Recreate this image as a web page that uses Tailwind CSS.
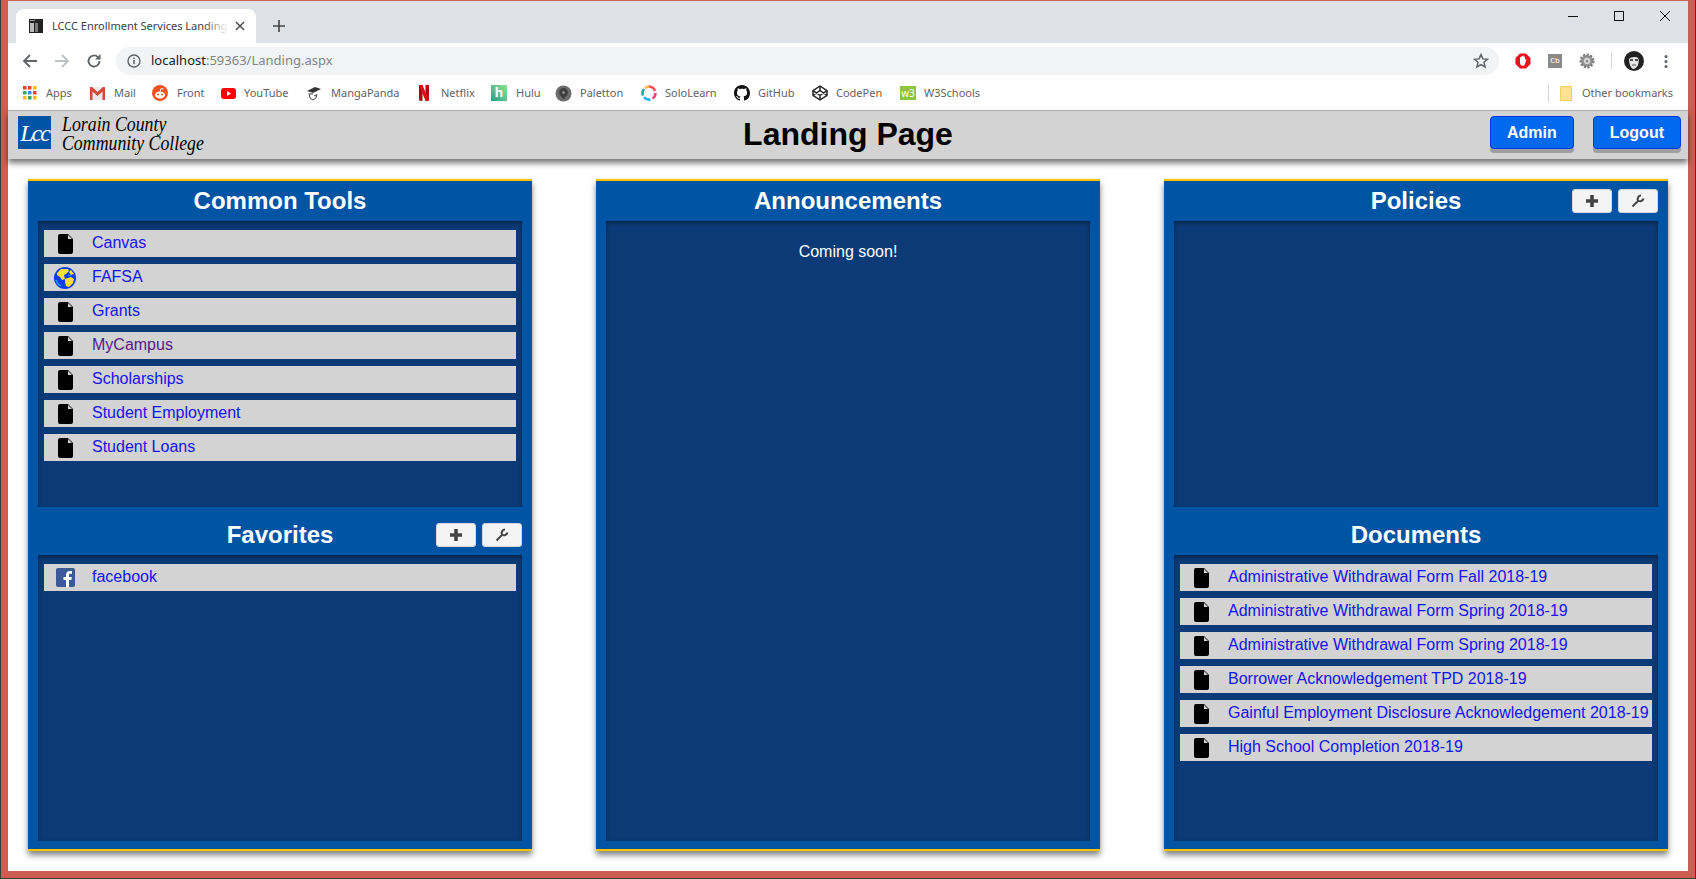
<!DOCTYPE html>
<html lang="en">
<head>
    <meta charset="UTF-8">
    <title>LCCC Enrollment Services Landing Page</title>
    <script src="https://cdn.jsdelivr.net/npm/@tailwindcss/browser@4"></script>
</head>
<body class="bg-[#3a3a3a] overflow-hidden">
<div class="w-[1696px] h-[879px] pl-px pr-px pb-px">
<div class="h-full bg-[#cc5f51] pt-px pl-[7px] pr-[7px] pb-[7px] flex flex-col">

    <!-- browser tab strip -->
    <div class="h-[42px] bg-[#dee1e6] flex items-start font-['Noto_Sans',sans-serif] shrink-0">
        <div class="mt-[8px] ml-[8px] w-[240px] h-[34px] bg-white rounded-t-[8px] flex items-center pl-[13px] pr-[11px]">
            <svg class="w-[14px] h-[14px] shrink-0" viewBox="0 0 14 14"><rect width="14" height="14" fill="#222"/><rect x="1" y="4" width="4" height="9" fill="#bbb"/><rect x="6" y="4" width="3" height="9" fill="#777"/><rect x="1" y="1" width="5" height="1" fill="#999"/></svg>
            <div class="relative ml-[9px] w-[176px] overflow-hidden whitespace-nowrap text-[11px] text-[#3c4043]">LCCC Enrollment Services Landing Page
                <div class="absolute right-0 top-0 h-full w-[24px] bg-gradient-to-r from-white/0 to-white"></div>
            </div>
            <svg class="ml-auto w-[10px] h-[10px] shrink-0" viewBox="0 0 10 10"><path d="M1 1l8 8M9 1l-8 8" stroke="#444" stroke-width="1.4"/></svg>
        </div>
        <svg class="ml-[17px] mt-[19px] w-[12px] h-[12px]" viewBox="0 0 12 12"><path d="M6 0v12M0 6h12" stroke="#444" stroke-width="1.6"/></svg>
        <div class="ml-auto flex">
            <div class="w-[46px] h-[29px] flex items-center justify-center"><svg class="w-[10px] h-[10px]" viewBox="0 0 10 10"><path d="M0 5.5h10" stroke="#111" stroke-width="1"/></svg></div>
            <div class="w-[46px] h-[29px] flex items-center justify-center"><svg class="w-[10px] h-[10px]" viewBox="0 0 10 10"><rect x=".5" y=".5" width="9" height="9" fill="none" stroke="#111"/></svg></div>
            <div class="w-[46px] h-[29px] flex items-center justify-center"><svg class="w-[10px] h-[10px]" viewBox="0 0 10 10"><path d="M0 0l10 10M10 0L0 10" stroke="#111" stroke-width="1"/></svg></div>
        </div>
    </div>

    <!-- browser toolbar -->
    <div class="h-[36px] bg-white flex items-start pt-[4px] font-['Noto_Sans',sans-serif] shrink-0">
        <div class="w-[108px] h-[28px] flex items-center">
            <svg class="ml-[14px] w-[16px] h-[16px]" viewBox="0 0 16 16"><path d="M15 8H2M8 2L2 8l6 6" fill="none" stroke="#5f6368" stroke-width="1.8"/></svg>
            <svg class="ml-[16px] w-[16px] h-[16px]" viewBox="0 0 16 16"><path d="M1 8h13M8 2l6 6-6 6" fill="none" stroke="#bdc1c6" stroke-width="1.8"/></svg>
            <svg class="ml-[16px] w-[16px] h-[16px]" viewBox="0 0 16 16"><path d="M13.500 8A5.500 5.500 0 1 1 11.800 4" fill="none" stroke="#5f6368" stroke-width="1.8"/><path d="M14.500 1v5.500H9z" fill="#5f6368"/></svg>
        </div>
        <div class="w-[1383px] h-[28px] bg-[#f1f3f4] rounded-full flex items-center pl-[11px] pr-[10px]">
            <svg class="w-[14px] h-[14px] shrink-0" viewBox="0 0 14 14"><circle cx="7" cy="7" r="6" fill="none" stroke="#5f6368" stroke-width="1.4"/><path d="M7 6v4.200M7 3.400v1.500" stroke="#5f6368" stroke-width="1.5"/></svg>
            <span class="ml-[10px] text-[13px] text-[#202124]">localhost<span class="text-[#80868b]">:59363/Landing.aspx</span></span>
            <svg class="ml-auto w-[16px] h-[16px]" viewBox="0 0 16 16"><path d="M8 1.600l1.900 4.300 4.600.4-3.500 3 1.100 4.600L8 11.500l-4.100 2.400L5 9.300l-3.500-3 4.600-.4z" fill="none" stroke="#5f6368" stroke-width="1.5"/></svg>
        </div>
        <div class="flex-1 h-[28px] relative">
            <svg class="absolute left-[16px] top-[6px] w-[16px] h-[16px]" viewBox="0 0 16 16"><path d="M5 .5h6L15.500 5v6L11 15.500H5L.5 11V5z" fill="#e8111d"/><path d="M5 7V4.500a.7.7 0 0 1 1.200 0V3.500a.7.7 0 0 1 1.300 0V3a.7.7 0 0 1 1.300 0v1a.7.7 0 0 1 1.200 0v3l.6-.8c.5-.5 1.100 0 .8.600L9.800 11.500c-.4.800-1 1.200-1.800 1.200-1.800 0-3-1.200-3-3z" fill="#fff"/></svg>
            <div class="absolute left-[49px] top-[7px] w-[14px] h-[14px] bg-[#8a8a8a] flex items-center justify-center text-white text-[8px] font-['Liberation_Mono',monospace]">Cb</div>
            <svg class="absolute left-[80px] top-[6px] w-[16px] h-[16px]" viewBox="0 0 16 16"><circle cx="8" cy="8" r="6" fill="#9a9a9a" stroke="#7d7d7d" stroke-width="3" stroke-dasharray="2 1.400"/><circle cx="8" cy="8" r="3" fill="#e2e2e2"/><circle cx="8" cy="8" r="1.500" fill="#8a8a8a"/></svg>
            <div class="absolute left-[112px] top-[5px] w-px h-[17px] bg-[#d5d5d5]"></div>
            <svg class="absolute left-[125px] top-[4px] w-[20px] h-[20px]" viewBox="0 0 20 20"><circle cx="10" cy="10" r="10" fill="#222"/><path d="M5 8c1-2 7-3 9-1 1 1 1 4 0 7-1 2-3 4-5 4-2-1-4-5-4-10z" fill="#e5e5e5"/><path d="M6 9h3M11 9h3" stroke="#222" stroke-width="1.400"/><path d="M8 14h4" stroke="#555"/></svg>
            <svg class="absolute left-[165px] top-[8px] w-[4px] h-[13px]" viewBox="0 0 4 13"><circle cx="2" cy="1.500" r="1.500" fill="#5f6368"/><circle cx="2" cy="6.500" r="1.500" fill="#5f6368"/><circle cx="2" cy="11.500" r="1.500" fill="#5f6368"/></svg>
        </div>
    </div>

    <!-- bookmarks bar -->
    <div class="h-[32px] bg-white border-b border-[#b4b4b4] pb-[3px] pl-[15px] flex items-center text-[11px] text-[#5f6368] font-['Noto_Sans',sans-serif] whitespace-nowrap shrink-0">
        <div class="w-[67px] flex items-center gap-[9px]">
            <svg class="w-[14px] h-[14px]" viewBox="0 0 14 14"><rect width="3.500" height="3.500" fill="#ea4335"/><rect x="5" width="3.500" height="3.500" fill="#ea4335"/><rect x="10" width="3.500" height="3.500" fill="#fbbc05"/><rect y="5" width="3.500" height="3.500" fill="#34a853"/><rect x="5" y="5" width="3.500" height="3.500" fill="#4285f4"/><rect x="10" y="5" width="3.500" height="3.500" fill="#ea4335"/><rect y="10" width="3.500" height="3.500" fill="#fbbc05"/><rect x="5" y="10" width="3.500" height="3.500" fill="#34a853"/><rect x="10" y="10" width="3.500" height="3.500" fill="#fbbc05"/></svg>
            <span>Apps</span>
        </div>
        <div class="w-[62px] flex items-center gap-[9px]">
            <svg class="w-[15px] h-[13px]" viewBox="0 0 15 13"><rect width="15" height="13" fill="#e8e8e8"/><path d="M0 0h2l5.500 5L13 0h2v13h-2.500V4.500L7.500 9l-5-4.500V13H0z" fill="#d44638"/></svg>
            <span>Mail</span>
        </div>
        <div class="w-[69px] flex items-center gap-[9px]">
            <svg class="w-[16px] h-[16px]" viewBox="0 0 16 16"><circle cx="8" cy="8" r="8" fill="#f4511e"/><ellipse cx="8" cy="10" rx="5" ry="3.500" fill="#fff"/><circle cx="6" cy="9.500" r="1" fill="#f4511e"/><circle cx="10" cy="9.500" r="1" fill="#f4511e"/><path d="M8 6.500L9 3.500l2.500.5" fill="none" stroke="#fff"/></svg>
            <span>Front</span>
        </div>
        <div class="w-[85px] flex items-center gap-[8px]">
            <svg class="w-[15px] h-[11px]" viewBox="0 0 15 11"><rect width="15" height="11" rx="3" fill="#f00"/><path d="M6 3l4 2.500L6 8z" fill="#fff"/></svg>
            <span>YouTube</span>
        </div>
        <div class="w-[112px] flex items-center gap-[9px]">
            <svg class="w-[16px] h-[16px]" viewBox="0 0 16 16"><path d="M3 8l1 5 3 2 3-2 1-4" fill="#fff" stroke="#444"/><path d="M1 6l8-4 6 2-8 4z" fill="#333"/><path d="M4 9h3M8 11l2-1" stroke="#333"/></svg>
            <span>MangaPanda</span>
        </div>
        <div class="w-[73px] flex items-center gap-[11px]">
            <svg class="w-[12px] h-[16px]" viewBox="0 0 12 16"><path d="M1 0h3.500v16L1 15.500z" fill="#b1060f"/><path d="M7.500 0H11v15.500L7.500 16z" fill="#b1060f"/><path d="M1 0h3.500L11 15.500 7.500 16z" fill="#e50914"/></svg>
            <span>Netflix</span>
        </div>
        <div class="w-[64px] flex items-center gap-[9px]">
            <div class="w-[16px] h-[16px] bg-gradient-to-tr from-[#0ca38b] to-[#8fe28f] text-white text-[13px] font-bold flex items-center justify-center">h</div>
            <span>Hulu</span>
        </div>
        <div class="w-[86px] flex items-center gap-[8px]">
            <svg class="w-[17px] h-[17px]" viewBox="0 0 17 17"><circle cx="8.500" cy="8.500" r="8" fill="#6d6d6d"/><path d="M8.500 3a4.500 4.500 0 0 1 4 6.500l-4 5-4-5a4.500 4.500 0 0 1 4-6.500z" fill="#3f3f3f"/><circle cx="8.500" cy="7.500" r="1.500" fill="#8a8a8a"/></svg>
            <span>Paletton</span>
        </div>
        <div class="w-[93px] flex items-center gap-[8px]">
            <svg class="w-[16px] h-[16px]" viewBox="0 0 16 16" fill="none" stroke-width="2.600"><path d="M8 1.500A6.500 6.500 0 0 1 14 6" stroke="#ef5350"/><path d="M14.500 8a6.500 6.500 0 0 1-3 5.500" stroke="#ec407a"/><path d="M9.500 14.400A6.500 6.500 0 0 1 3 12.200" stroke="#29b6f6"/><path d="M2 10.500A6.500 6.500 0 0 1 3 4" stroke="#26a69a"/><path d="M4 3.200A6.500 6.500 0 0 1 8 1.500" stroke="#ffb74d"/></svg>
            <span>SoloLearn</span>
        </div>
        <div class="w-[78px] flex items-center gap-[8px]">
            <svg class="w-[16px] h-[16px]" viewBox="0 0 16 16"><path fill="#111" d="M8 0C3.580 0 0 3.580 0 8c0 3.540 2.290 6.530 5.470 7.590.4.070.55-.17.55-.38 0-.19-.01-.82-.01-1.490-2.010.37-2.530-.49-2.690-.94-.09-.23-.48-.94-.82-1.130-.28-.15-.68-.52-.01-.53.63-.01 1.080.58 1.230.82.72 1.210 1.870.87 2.330.66.070-.52.28-.87.51-1.070-1.780-.2-3.640-.89-3.640-3.950 0-.87.31-1.590.82-2.150-.08-.2-.36-1.020.08-2.120 0 0 .67-.21 2.200.82.64-.18 1.320-.27 2-.27.68 0 1.360.09 2 .27 1.530-1.040 2.200-.82 2.200-.82.44 1.100.16 1.920.08 2.120.51.56.82 1.270.82 2.150 0 3.070-1.870 3.750-3.650 3.950.29.25.54.73.54 1.480 0 1.070-.01 1.930-.01 2.200 0 .21.15.46.55.38A8.013 8.013 0 0 0 16 8c0-4.420-3.580-8-8-8z"/></svg>
            <span>GitHub</span>
        </div>
        <div class="w-[88px] flex items-center gap-[8px]">
            <svg class="w-[16px] h-[16px]" viewBox="0 0 16 16" fill="none" stroke="#222" stroke-width="1.500" stroke-linejoin="round"><path d="M8 1l7 4.700v4.600L8 15l-7-4.700V5.700z"/><path d="M8 1v4.500M8 10.500V15M1 5.700L8 10.500l7-4.800M1 10.300L8 5.500l7 4.800"/></svg>
            <span>CodePen</span>
        </div>
        <div class="flex items-center gap-[8px]">
            <div class="w-[16px] h-[14px] bg-[#8cc63f] text-white text-[10px] leading-none flex items-center justify-center">w3</div>
            <span>W3Schools</span>
        </div>
        <div class="ml-auto flex items-center">
            <div class="w-px h-[18px] bg-[#d5d5d5] mr-[11px]"></div>
            <svg class="w-[12px] h-[15px] mr-[10px]" viewBox="0 0 12 15"><path d="M.5.500h11v14H.5z" fill="#fde293" stroke="#f3cf5f"/></svg>
            <span class="mr-[15px]">Other bookmarks</span>
        </div>
    </div>

    <!-- page -->
    <div class="flex-1 bg-white flex flex-col font-['Liberation_Sans',Arial,sans-serif]">

        <header class="relative z-10 h-[48px] bg-[#d3d3d3] shadow-[0_4px_6px_rgba(0,0,0,0.55)] grid grid-cols-[1fr_auto_1fr] items-start pt-[5px] pl-[10px] pr-[7px]">
            <div class="flex items-start">
                <div class="w-[33px] h-[33px] bg-[#0054a6] flex items-center justify-center text-white italic text-[24px] tracking-[-2px] font-['Liberation_Serif',serif]">Lcc</div>
                <div class="ml-[11px] -mt-px text-black italic text-[20px] leading-[19px] font-['Liberation_Serif',serif] whitespace-nowrap scale-x-[.89] origin-left">
                    <div>Lorain County</div>
                    <div>Community College</div>
                </div>
            </div>
            <h1 class="mr-[3px] text-[32px] font-bold text-black leading-[37px]">Landing Page</h1>
            <div class="flex justify-end gap-[19px]">
                <button class="h-[33px] px-[16px] bg-[#0069ed] border border-[#0036e6] rounded-[4px] text-white font-bold text-[16px] shadow-[0_4px_0_#a0a0a0]">Admin</button>
                <button class="h-[33px] px-[16px] bg-[#0069ed] border border-[#0036e6] rounded-[4px] text-white font-bold text-[16px] shadow-[0_4px_0_#a0a0a0]">Logout</button>
            </div>
        </header>

        <main class="grid grid-cols-3 gap-[64px] pt-[20px] px-[20px]">

            <!-- left column -->
            <section class="h-[672px] bg-[#0054a4] border-y-2 border-[#ffc400] px-[10px] shadow-[0_4px_6px_rgba(0,0,0,0.5)]">
                <div class="h-[40px] flex items-center justify-center text-white font-bold text-[24px]">Common Tools</div>
                <div class="h-[286px] bg-[#0c3a76] shadow-[inset_0_2px_4px_rgba(0,0,0,0.4)] pt-[9px] px-[6px] flex flex-col gap-[7px]">
                    <div class="h-[27px] bg-[#d3d3d3] flex items-center text-[16px] text-[#1414ee]">
                        <div class="w-[42px] mr-[6px] flex justify-center"><svg class="w-[15px] h-[20px]" viewBox="0 0 15 20"><path d="M2 0h8l5 5v13a2 2 0 0 1-2 2H2a2 2 0 0 1-2-2V2a2 2 0 0 1 2-2z"/><path d="M10 1l4 4h-4z" fill="#d8d8d8"/></svg></div>
                        <a class="-mt-px">Canvas</a>
                    </div>
                    <div class="h-[27px] bg-[#d3d3d3] flex items-center text-[16px] text-[#1414ee]">
                        <div class="w-[42px] mr-[6px] flex justify-center">
                            <svg class="w-[22px] h-[22px]" viewBox="0 0 22 22"><circle cx="11" cy="11" r="11" fill="#0a3cf0"/><path d="M3 6l4-4 7 0 1 2-3 3-2 1 1 4-3 1-2-3-3-2z" fill="#ffe135"/><path d="M11 12l6-2 3 2-1 4-4 4-3-1-1-4z" fill="#ffe135"/><path d="M17 3l3 4-3 1-2-3z" fill="#ffe135"/><path d="M2 13l2 4 3 2" fill="none" stroke="#23a0ff" stroke-width="1.500"/><path d="M14 8l3 1" stroke="#23a0ff"/></svg>
                        </div>
                        <a class="-mt-px">FAFSA</a>
                    </div>
                    <div class="h-[27px] bg-[#d3d3d3] flex items-center text-[16px] text-[#1414ee]">
                        <div class="w-[42px] mr-[6px] flex justify-center"><svg class="w-[15px] h-[20px]" viewBox="0 0 15 20"><path d="M2 0h8l5 5v13a2 2 0 0 1-2 2H2a2 2 0 0 1-2-2V2a2 2 0 0 1 2-2z"/><path d="M10 1l4 4h-4z" fill="#d8d8d8"/></svg></div>
                        <a class="-mt-px">Grants</a>
                    </div>
                    <div class="h-[27px] bg-[#d3d3d3] flex items-center text-[16px] text-[#551a8b]">
                        <div class="w-[42px] mr-[6px] flex justify-center"><svg class="w-[15px] h-[20px]" viewBox="0 0 15 20"><path d="M2 0h8l5 5v13a2 2 0 0 1-2 2H2a2 2 0 0 1-2-2V2a2 2 0 0 1 2-2z"/><path d="M10 1l4 4h-4z" fill="#d8d8d8"/></svg></div>
                        <a class="-mt-px">MyCampus</a>
                    </div>
                    <div class="h-[27px] bg-[#d3d3d3] flex items-center text-[16px] text-[#1414ee]">
                        <div class="w-[42px] mr-[6px] flex justify-center"><svg class="w-[15px] h-[20px]" viewBox="0 0 15 20"><path d="M2 0h8l5 5v13a2 2 0 0 1-2 2H2a2 2 0 0 1-2-2V2a2 2 0 0 1 2-2z"/><path d="M10 1l4 4h-4z" fill="#d8d8d8"/></svg></div>
                        <a class="-mt-px">Scholarships</a>
                    </div>
                    <div class="h-[27px] bg-[#d3d3d3] flex items-center text-[16px] text-[#1414ee]">
                        <div class="w-[42px] mr-[6px] flex justify-center"><svg class="w-[15px] h-[20px]" viewBox="0 0 15 20"><path d="M2 0h8l5 5v13a2 2 0 0 1-2 2H2a2 2 0 0 1-2-2V2a2 2 0 0 1 2-2z"/><path d="M10 1l4 4h-4z" fill="#d8d8d8"/></svg></div>
                        <a class="-mt-px">Student Employment</a>
                    </div>
                    <div class="h-[27px] bg-[#d3d3d3] flex items-center text-[16px] text-[#1414ee]">
                        <div class="w-[42px] mr-[6px] flex justify-center"><svg class="w-[15px] h-[20px]" viewBox="0 0 15 20"><path d="M2 0h8l5 5v13a2 2 0 0 1-2 2H2a2 2 0 0 1-2-2V2a2 2 0 0 1 2-2z"/><path d="M10 1l4 4h-4z" fill="#d8d8d8"/></svg></div>
                        <a class="-mt-px">Student Loans</a>
                    </div>
                </div>
                <div class="relative h-[48px] pt-[8px] flex items-center justify-center text-white font-bold text-[24px]">
                    Favorites
                    <div class="absolute right-0 top-[16px] flex gap-[6px]">
                        <button class="w-[40px] h-[24px] bg-[#f4f4f4] border border-[#cfd6df] rounded-[3px] flex items-center justify-center"><svg class="w-[12px] h-[12px]" viewBox="0 0 12 12"><path d="M6 0v12M0 6h12" stroke="#444" stroke-width="3.600"/></svg></button>
                        <button class="w-[40px] h-[24px] bg-[#f4f4f4] border border-[#cfd6df] rounded-[3px] flex items-center justify-center"><svg class="w-[14px] h-[14px]" viewBox="0 0 14 14" fill="none" stroke="#444" stroke-width="2"><path d="M1.500 12.500L7 7"/><path d="M10 1.500A3.500 3.500 0 0 0 7 6.500 3.500 3.500 0 0 0 12.500 4.500"/></svg></button>
                    </div>
                </div>
                <div class="h-[286px] bg-[#0c3a76] shadow-[inset_0_2px_4px_rgba(0,0,0,0.4)] pt-[9px] px-[6px]">
                    <div class="h-[27px] bg-[#d3d3d3] flex items-center text-[16px] text-[#1414ee]">
                        <div class="w-[42px] mr-[6px] flex justify-center">
                            <svg class="w-[19px] h-[19px]" viewBox="0 0 19 19"><rect width="19" height="19" rx="2" fill="#3b5998"/><path d="M13 19v-7h2.400l.4-3H13V7.200c0-.9.300-1.400 1.500-1.400H16V3.100C15.700 3.100 14.800 3 13.800 3 11.600 3 10 4.300 10 6.800V9H7.500v3H10v7z" fill="#fff"/></svg>
                        </div>
                        <a class="-mt-px">facebook</a>
                    </div>
                </div>
            </section>

            <!-- middle column -->
            <section class="h-[672px] bg-[#0054a4] border-y-2 border-[#ffc400] px-[10px] shadow-[0_4px_6px_rgba(0,0,0,0.5)]">
                <div class="h-[40px] flex items-center justify-center text-white font-bold text-[24px]">Announcements</div>
                <div class="h-[620px] bg-[#0c3a76] shadow-[inset_0_2px_4px_rgba(0,0,0,0.4)] pt-[19px] text-center text-white text-[16px]">Coming soon!</div>
            </section>

            <!-- right column -->
            <section class="h-[672px] bg-[#0054a4] border-y-2 border-[#ffc400] px-[10px] shadow-[0_4px_6px_rgba(0,0,0,0.5)]">
                <div class="relative h-[40px] flex items-center justify-center text-white font-bold text-[24px]">
                    Policies
                    <div class="absolute right-0 top-[8px] flex gap-[6px]">
                        <button class="w-[40px] h-[24px] bg-[#f4f4f4] border border-[#cfd6df] rounded-[3px] flex items-center justify-center"><svg class="w-[12px] h-[12px]" viewBox="0 0 12 12"><path d="M6 0v12M0 6h12" stroke="#444" stroke-width="3.600"/></svg></button>
                        <button class="w-[40px] h-[24px] bg-[#f4f4f4] border border-[#cfd6df] rounded-[3px] flex items-center justify-center"><svg class="w-[14px] h-[14px]" viewBox="0 0 14 14" fill="none" stroke="#444" stroke-width="2"><path d="M1.500 12.500L7 7"/><path d="M10 1.500A3.500 3.500 0 0 0 7 6.500 3.500 3.500 0 0 0 12.500 4.500"/></svg></button>
                    </div>
                </div>
                <div class="h-[286px] bg-[#0c3a76] shadow-[inset_0_2px_4px_rgba(0,0,0,0.4)]"></div>
                <div class="h-[48px] pt-[8px] flex items-center justify-center text-white font-bold text-[24px]">Documents</div>
                <div class="h-[286px] bg-[#0c3a76] shadow-[inset_0_2px_4px_rgba(0,0,0,0.4)] pt-[9px] px-[6px] flex flex-col gap-[7px]">
                    <div class="h-[27px] bg-[#d3d3d3] flex items-center text-[16px] text-[#1414ee] whitespace-nowrap">
                        <div class="w-[42px] mr-[6px] flex justify-center"><svg class="w-[15px] h-[20px]" viewBox="0 0 15 20"><path d="M2 0h8l5 5v13a2 2 0 0 1-2 2H2a2 2 0 0 1-2-2V2a2 2 0 0 1 2-2z"/><path d="M10 1l4 4h-4z" fill="#d8d8d8"/></svg></div>
                        <a class="-mt-px">Administrative Withdrawal Form Fall 2018-19</a>
                    </div>
                    <div class="h-[27px] bg-[#d3d3d3] flex items-center text-[16px] text-[#1414ee] whitespace-nowrap">
                        <div class="w-[42px] mr-[6px] flex justify-center"><svg class="w-[15px] h-[20px]" viewBox="0 0 15 20"><path d="M2 0h8l5 5v13a2 2 0 0 1-2 2H2a2 2 0 0 1-2-2V2a2 2 0 0 1 2-2z"/><path d="M10 1l4 4h-4z" fill="#d8d8d8"/></svg></div>
                        <a class="-mt-px">Administrative Withdrawal Form Spring 2018-19</a>
                    </div>
                    <div class="h-[27px] bg-[#d3d3d3] flex items-center text-[16px] text-[#1414ee] whitespace-nowrap">
                        <div class="w-[42px] mr-[6px] flex justify-center"><svg class="w-[15px] h-[20px]" viewBox="0 0 15 20"><path d="M2 0h8l5 5v13a2 2 0 0 1-2 2H2a2 2 0 0 1-2-2V2a2 2 0 0 1 2-2z"/><path d="M10 1l4 4h-4z" fill="#d8d8d8"/></svg></div>
                        <a class="-mt-px">Administrative Withdrawal Form Spring 2018-19</a>
                    </div>
                    <div class="h-[27px] bg-[#d3d3d3] flex items-center text-[16px] text-[#1414ee] whitespace-nowrap">
                        <div class="w-[42px] mr-[6px] flex justify-center"><svg class="w-[15px] h-[20px]" viewBox="0 0 15 20"><path d="M2 0h8l5 5v13a2 2 0 0 1-2 2H2a2 2 0 0 1-2-2V2a2 2 0 0 1 2-2z"/><path d="M10 1l4 4h-4z" fill="#d8d8d8"/></svg></div>
                        <a class="-mt-px">Borrower Acknowledgement TPD 2018-19</a>
                    </div>
                    <div class="h-[27px] bg-[#d3d3d3] flex items-center text-[16px] text-[#1414ee] whitespace-nowrap">
                        <div class="w-[42px] mr-[6px] flex justify-center"><svg class="w-[15px] h-[20px]" viewBox="0 0 15 20"><path d="M2 0h8l5 5v13a2 2 0 0 1-2 2H2a2 2 0 0 1-2-2V2a2 2 0 0 1 2-2z"/><path d="M10 1l4 4h-4z" fill="#d8d8d8"/></svg></div>
                        <a class="-mt-px">Gainful Employment Disclosure Acknowledgement 2018-19</a>
                    </div>
                    <div class="h-[27px] bg-[#d3d3d3] flex items-center text-[16px] text-[#1414ee] whitespace-nowrap">
                        <div class="w-[42px] mr-[6px] flex justify-center"><svg class="w-[15px] h-[20px]" viewBox="0 0 15 20"><path d="M2 0h8l5 5v13a2 2 0 0 1-2 2H2a2 2 0 0 1-2-2V2a2 2 0 0 1 2-2z"/><path d="M10 1l4 4h-4z" fill="#d8d8d8"/></svg></div>
                        <a class="-mt-px">High School Completion 2018-19</a>
                    </div>
                </div>
            </section>
        </main>
    </div>
</div>
</div>
</body>
</html>
